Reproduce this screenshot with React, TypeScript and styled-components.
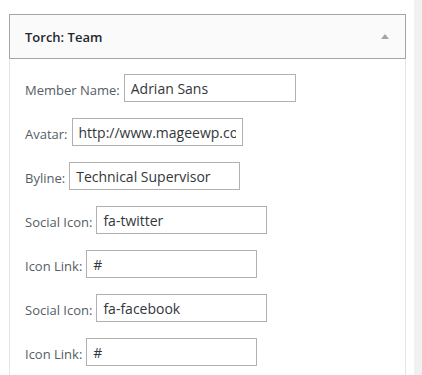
import React from 'react';
import styled, { createGlobalStyle } from 'styled-components';

const GlobalStyle = createGlobalStyle`
  html, body {
    margin: 0;
    padding: 0;
    background: #ffffff;
    font-family: "Open Sans", "Liberation Sans", sans-serif;
  }
`;

// Layout
const Page = styled.div`
  display: flex;
  width: 422px;
  height: 375px;
  overflow: hidden;
`;

const Main = styled.div`
  flex: 1;
  padding: 14px 0 0 9px;
`;

const Gutter = styled.div`
  width: 8px;
  background: #f1f1f1;
`;

// Widget
const Widget = styled.div`
  width: 397px;
`;

const WidgetHeader = styled.div`
  display: flex;
  align-items: center;
  justify-content: space-between;
  box-sizing: border-box;
  height: 45px;
  padding: 0 16px 0 15px;
  background: #fafafa;
  border: 1px solid #a5a5a5;
`;

const Title = styled.h3`
  margin: 0;
  font-size: 13px;
  font-weight: 600;
  color: #23282d;
`;

const Arrow = styled.span`
  width: 0;
  height: 0;
  border-left: 4px solid transparent;
  border-right: 4px solid transparent;
  border-bottom: 5px solid #a0a5aa;
`;

const WidgetBody = styled.div`
  display: flex;
  flex-direction: column;
  gap: 16px;
  padding: 15px 15px 20px;
  border: 1px solid #e5e5e5;
  border-top: none;
`;

const Row = styled.div`
  display: flex;
  align-items: center;
  gap: 4px;
`;

const Label = styled.label`
  font-size: 13px;
  color: #555d66;
  padding-top: 3px;
`;

const Field = styled.input`
  box-sizing: border-box;
  width: ${(p: { $w?: number }) => p.$w ?? 171}px;
  height: 28px;
  padding: 0 6px;
  border: 1px solid #b0b0b0;
  border-radius: 0;
  outline: none;
  background: #fff;
  font-family: "Open Sans", "Liberation Sans", sans-serif;
  font-size: 14px;
  color: #32373c;
`;

const fields = [
  { label: 'Member Name:', value: 'Adrian Sans', w: 172 },
  { label: 'Avatar:', value: 'http://www.mageewp.com/wp-content/avatar.jpg' },
  { label: 'Byline:', value: 'Technical Supervisor' },
  { label: 'Social Icon:', value: 'fa-twitter' },
  { label: 'Icon Link:', value: '#' },
  { label: 'Social Icon:', value: 'fa-facebook' },
  { label: 'Icon Link:', value: '#' },
];

export default function App() {
  return (
    <Page>
      <GlobalStyle />
      <Main>
        <Widget>
          <WidgetHeader>
            <Title>Torch: Team</Title>
            <Arrow />
          </WidgetHeader>
          <WidgetBody>
            {fields.map((f, i) => (
              <Row key={i}>
                <Label>{f.label}</Label>
                <Field $w={f.w} value={f.value} readOnly />
              </Row>
            ))}
          </WidgetBody>
        </Widget>
      </Main>
      <Gutter />
    </Page>
  );
}
